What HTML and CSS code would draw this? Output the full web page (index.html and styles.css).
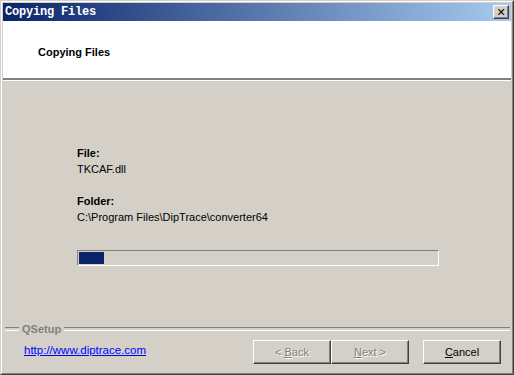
FILE: index.html
```html
<!DOCTYPE html>
<html lang="en">
<head>
    <meta charset="UTF-8">
    <title>Copying Files</title>
    <link rel="stylesheet" href="styles.css">
</head>
<body>
    <div class="window">
        <div class="window-inner">
            <div class="titlebar">
                <span class="title">Copying Files</span>
                <span class="close-btn">&#x2715;</span>
            </div>
            <div class="header">
                <h1>Copying Files</h1>
            </div>
            <div class="content">
                <div class="label">File:</div>
                <div class="value">TKCAF.dll</div>
                <div class="label folder">Folder:</div>
                <div class="value">C:\Program Files\DipTrace\converter64</div>
                <div class="progress">
                    <div class="progress-fill" style="width: 25px"></div>
                </div>
            </div>
            <div class="footer">
                <div class="group-line"><span>QSetup</span></div>
                <div class="actions">
                    <a class="site-link" href="#">http://www.diptrace.com</a>
                    <div class="buttons">
                        <button class="btn" disabled>&lt; <u>B</u>ack</button>
                        <button class="btn" disabled><u>N</u>ext &gt;</button>
                        <button class="btn cancel"><u>C</u>ancel</button>
                    </div>
                </div>
            </div>
        </div>
    </div>
</body>
</html>
```

FILE: styles.css
```css
* {
    margin: 0;
    padding: 0;
    box-sizing: border-box;
}
body {
    width: 514px;
    height: 375px;
    background-color: #d4d0c8;
    font-family: 'Liberation Sans', Arial, sans-serif;
    font-size: 11px;
    color: #000;
    overflow: hidden;
}
.window {
    width: 514px;
    height: 375px;
    border-top: 1px solid #d4d0c8;
    border-left: 1px solid #d4d0c8;
    border-right: 1px solid #404040;
    border-bottom: 1px solid #404040;
}
.window-inner {
    height: 100%;
    display: flex;
    flex-direction: column;
    padding: 1px;
    border-top: 1px solid #fff;
    border-left: 1px solid #fff;
    border-right: 1px solid #808080;
    border-bottom: 1px solid #808080;
}
.titlebar {
    height: 18px;
    display: flex;
    align-items: center;
    justify-content: space-between;
    padding: 0 2px 0 2px;
    background: linear-gradient(to right, #0a246a, #a6caf0);
}
.title {
    font-family: 'Liberation Mono', monospace;
    font-weight: bold;
    font-size: 12px;
    color: #fff;
    letter-spacing: -0.2px;
}
.close-btn {
    width: 16px;
    height: 14px;
    display: flex;
    align-items: center;
    justify-content: center;
    background-color: #d4d0c8;
    border-top: 1px solid #fff;
    border-left: 1px solid #fff;
    border-right: 1px solid #404040;
    border-bottom: 1px solid #404040;
    box-shadow: inset -1px -1px 0 #808080;
    font-family: 'DejaVu Sans', sans-serif;
    font-size: 11px;
    font-weight: bold;
    line-height: 1;
    color: #000;
}
.header {
    height: 60px;
    background-color: #fff;
    border-bottom: 1px solid #fff;
    box-shadow: inset 0 -2px 0 #808080;
    display: flex;
    align-items: center;
    padding: 2px 0 0 35px;
}
h1 {
    font-size: 11px;
    font-weight: bold;
}
.content {
    flex: 1;
    padding: 64px 0 0 74px;
    line-height: 16px;
}
.label {
    font-weight: bold;
}
.folder {
    margin-top: 16px;
}
.progress {
    width: 362px;
    height: 16px;
    margin-top: 25px;
    padding: 1px;
    border-top: 1px solid #808080;
    border-left: 1px solid #808080;
    border-right: 1px solid #fff;
    border-bottom: 1px solid #fff;
}
.progress-fill {
    height: 100%;
    background-color: #0a246a;
}
.footer {
    height: 50px;
}
.group-line {
    height: 14px;
    display: flex;
    align-items: center;
    gap: 3px;
    margin: 0 1px 0 2px;
    font-weight: bold;
    color: #808080;
}
.group-line::before,
.group-line::after {
    content: '';
    height: 2px;
    border-top: 1px solid #808080;
    border-bottom: 1px solid #fff;
}
.group-line::before {
    width: 14px;
}
.group-line::after {
    flex: 1;
}
.actions {
    display: flex;
    justify-content: space-between;
    margin-top: 4px;
    padding: 0 10px 0 21px;
}
.site-link {
    margin-top: 3px;
    color: #0000ff;
    font-size: 11.5px;
    line-height: 14px;
}
.buttons {
    display: flex;
}
.btn {
    width: 78px;
    height: 24px;
    font-family: 'Liberation Sans', Arial, sans-serif;
    font-size: 11px;
    color: #000;
    background-color: #d4d0c8;
    border-top: 1px solid #fff;
    border-left: 1px solid #fff;
    border-right: 1px solid #404040;
    border-bottom: 1px solid #404040;
    box-shadow: inset -1px -1px 0 #808080;
}
.btn:disabled {
    color: #808080;
    text-shadow: 1px 1px 0 #fff;
}
.cancel {
    margin-left: 14px;
}
```
